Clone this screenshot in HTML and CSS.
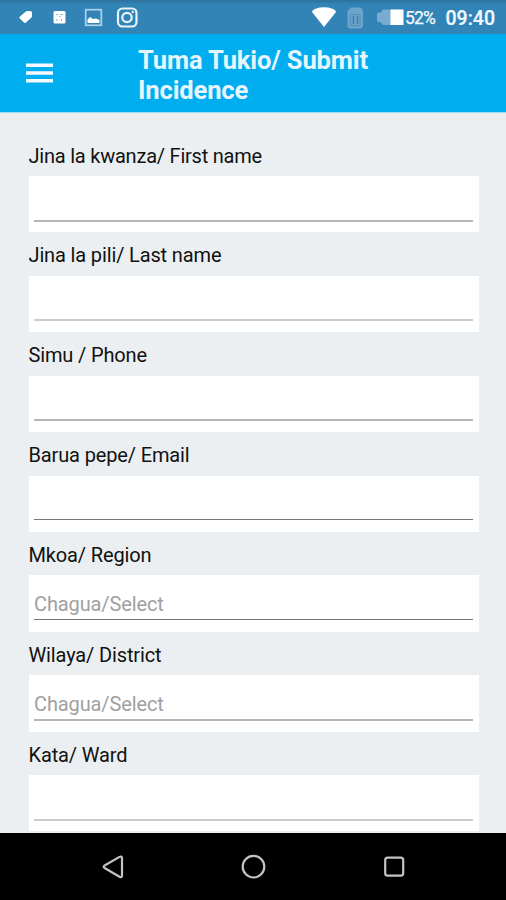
FILE: index.html
```html
<!DOCTYPE html>
<html lang="sw">
<head>
<meta charset="utf-8">
<title>Tuma Tukio/ Submit Incidence</title>
<link rel="stylesheet" href="styles.css">
</head>
<body>
<div class="screen">
  <div class="status">
    <svg class="status-left" width="150" height="34" viewBox="0 0 150 34">
      <path d="M20 16.500 25.500 11.800Q27 10.600 28.500 11L31 11.300Q32 11.500 32 12.500V16Q32 17 31 18L26 22.500Q25 23.400 24 22.400L20 18.800Q18.500 17.600 20 16.500Z" fill="#fff"/>
      <rect x="53.500" y="11" width="12" height="12.500" rx="1.500" fill="#fff"/>
      <path d="M56 14.500h2.500M60.500 14.500h2.500M57 19v2M61.500 19v2M59 16.500h1.500" stroke="#8db8d5" fill="none"/>
      <rect x="85.700" y="9.700" width="15.600" height="15.600" fill="none" stroke="#b0d3e9" stroke-width="1.700"/>
      <path d="M87.500 23v-3.500l2.500-2.500 3 2 3-.5 3.500 1.500v3z" fill="#fff"/>
      <rect x="118" y="8.500" width="18.500" height="18" rx="4.500" fill="none" stroke="#e7f4fc" stroke-width="2.200"/>
      <circle cx="127" cy="17.500" r="4.700" fill="none" stroke="#e7f4fc" stroke-width="2.200"/>
      <circle cx="132.700" cy="12" r="1.200" fill="#e7f4fc"/>
    </svg>
    <div class="status-right">
      <svg width="94" height="34" viewBox="0 0 94 34">
        <path d="M.8 11.800Q3.500 7.300 13 7.300T25.200 11.800L13 27z" fill="#fff"/>
        <path d="M40 7.500h7q5 0 5 4v14q0 3-3 3h-9.500q-3 0-3-3V11z" fill="#6da5ca"/>
        <path d="M39.500 14.500h9.500v11h-9.500z" fill="none" stroke="#4f90ba"/>
        <path d="M42.500 16v8M46.500 16v8" stroke="#3680b0" stroke-width="1.600"/>
        <path d="M70 9.500H81V25H70l-2.500-3h-2q-1.500 0-1.500-2v-5.500q0-2 1.500-2h2z" transform="translate(2 0)" fill="#79acd0"/>
        <rect x="79.500" y="9.500" width="13" height="15.500" fill="#fff"/>
      </svg>
      <span class="percent">52%</span>
      <span class="clock">09:40</span>
    </div>
  </div>
  <header class="appbar">
    <svg class="menu" width="27" height="20" viewBox="0 0 27 20"><path d="M0 2.200h27M0 10h27M0 17.800h27" stroke="#f2faff" stroke-width="3.400"/></svg>
    <h1>Tuma Tukio/ Submit<br>Incidence</h1>
  </header>
  <main class="form">
    <div class="field"><label class="long">Jina la kwanza/ First name</label><div class="box mid"></div></div>
    <div class="field"><label>Jina la pili/ Last name</label><div class="box light"></div></div>
    <div class="field"><label>Simu / Phone</label><div class="box mid"></div></div>
    <div class="field"><label>Barua pepe/ Email</label><div class="box sharp"></div></div>
    <div class="field"><label>Mkoa/ Region</label><div class="box sharp"><span>Chagua/Select</span></div></div>
    <div class="field"><label>Wilaya/ District</label><div class="box mid"><span>Chagua/Select</span></div></div>
    <div class="field"><label>Kata/ Ward</label><div class="box light"></div></div>
  </main>
  <nav class="navbar">
    <svg width="506" height="67" viewBox="0 0 506 67" fill="none" stroke="#c4c4c4" stroke-width="2.200">
      <path d="M105 32.300 119.500 23.900Q122 22.700 122 25V42.500Q122 45 119.500 43.700L105 35.300Q102.300 33.800 105 32.300Z"/>
      <circle cx="253.500" cy="33.700" r="10.800"/>
      <rect x="385.200" y="24.700" width="18" height="18" rx="2.500"/>
    </svg>
  </nav>
</div>
</body>
</html>
```
FILE: styles.css
```css
* { box-sizing: border-box; }
body { margin: 0; font-family: Roboto, "Liberation Sans", sans-serif; }
.screen { width: 506px; height: 900px; display: flex; flex-direction: column; overflow: hidden; background: #ebeff2; }
.status { height: 34px; flex: none; display: flex; justify-content: space-between; background: linear-gradient(#2d719b 0, #3184b5 4px, #3184b5 100%); color: #f3faff; }
.status svg { display: block; flex: none; }
.status-right { display: flex; width: 195px; line-height: 37px; white-space: nowrap; }
.percent { width: 40.500px; font-size: 17.500px; letter-spacing: -0.800px; -webkit-text-stroke: 0.250px; }
.clock { font-size: 19.500px; font-weight: 500; -webkit-text-stroke: 0.200px; }
.appbar { height: 79px; flex: none; display: flex; align-items: center; padding-left: 26px; background: #00aeef; border-bottom: 1px solid #9bdcf5; }
.menu { flex: none; }
h1 { margin: 0 0 0 85px; padding-top: 3px; font-size: 25.500px; line-height: 30px; font-weight: 700; letter-spacing: -0.120px; color: #e6f5fe; white-space: nowrap; }
.form { flex: 1; min-height: 0; overflow: hidden; padding: 19.600px 27.500px 0 28.500px; }
.field { height: 99.830px; display: flex; flex-direction: column; }
label { height: 43.500px; flex: none; line-height: 46px; font-size: 20px; letter-spacing: -0.140px; color: #111; white-space: nowrap; }
label.long { letter-spacing: -0.220px; }
.box { height: 56.330px; flex: none; padding: 0 5.500px 10.800px; background: #fff; display: flex; flex-direction: column; justify-content: flex-end; }
.box::after { content: ""; height: 2px; flex: none; background: #b5b5b5; }
.box.light::after { background: #cbcbcb; }
.box.sharp::after { height: 1px; background: #777; margin-bottom: 1px; }
.box span { font-size: 20px; line-height: 24px; letter-spacing: -0.120px; color: #a0a0a0; margin-bottom: 3px; }
.navbar { height: 67px; flex: none; background: #000; }
.navbar svg { display: block; }
```
